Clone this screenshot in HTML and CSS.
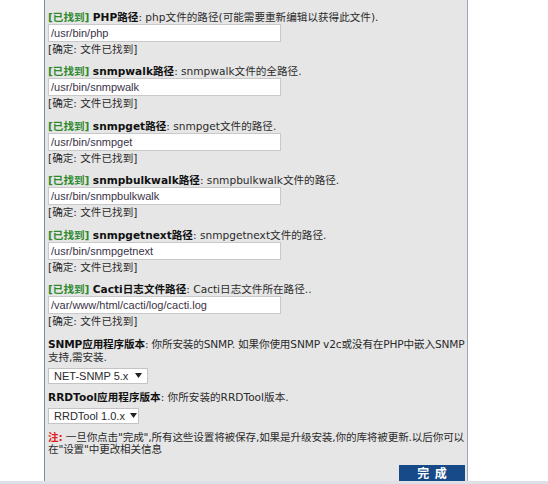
FILE: index.html
```html
<!DOCTYPE html>
<html lang="zh-CN">
<head>
<meta charset="utf-8">
<title>Cacti 安装</title>
<link rel="stylesheet" href="styles.css">
</head>
<body>
<div class="page">
  <div class="side"></div>
  <div class="panel">
    <div class="block">
      <div class="head"><span class="found">[已找到]</span> <b>PHP路径</b>: php文件的路径(可能需要重新编辑以获得此文件).</div>
      <div class="input">/usr/bin/php</div>
      <div class="status">[确定: 文件已找到]</div>
    </div>
    <div class="block">
      <div class="head"><span class="found">[已找到]</span> <b>snmpwalk路径</b>: snmpwalk文件的全路径.</div>
      <div class="input">/usr/bin/snmpwalk</div>
      <div class="status">[确定: 文件已找到]</div>
    </div>
    <div class="block">
      <div class="head"><span class="found">[已找到]</span> <b>snmpget路径</b>: snmpget文件的路径.</div>
      <div class="input">/usr/bin/snmpget</div>
      <div class="status">[确定: 文件已找到]</div>
    </div>
    <div class="block">
      <div class="head"><span class="found">[已找到]</span> <b>snmpbulkwalk路径</b>: snmpbulkwalk文件的路径.</div>
      <div class="input">/usr/bin/snmpbulkwalk</div>
      <div class="status">[确定: 文件已找到]</div>
    </div>
    <div class="block">
      <div class="head"><span class="found">[已找到]</span> <b>snmpgetnext路径</b>: snmpgetnext文件的路径.</div>
      <div class="input">/usr/bin/snmpgetnext</div>
      <div class="status">[确定: 文件已找到]</div>
    </div>
    <div class="block">
      <div class="head"><span class="found">[已找到]</span> <b>Cacti日志文件路径</b>: Cacti日志文件所在路径..</div>
      <div class="input">/var/www/html/cacti/log/cacti.log</div>
      <div class="status">[确定: 文件已找到]</div>
    </div>
    <div class="block opt">
      <div class="head tight"><b>SNMP应用程序版本</b>: 你所安装的SNMP. 如果你使用SNMP v2c或没有在PHP中嵌入SNMP<br>支持,需安装.</div>
      <div class="select wide"><span>NET-SNMP 5.x</span><svg class="arrow" width="7" height="5" viewBox="0 0 7 5"><path d="M0 0h7L3.5 5z" fill="#222"/></svg></div>
    </div>
    <div class="block opt">
      <div class="head"><b>RRDTool应用程序版本</b>: 你所安装的RRDTool版本.</div>
      <div class="select narrow"><span>RRDTool 1.0.x</span><svg class="arrow" width="7" height="5" viewBox="0 0 7 5"><path d="M0 0h7L3.5 5z" fill="#222"/></svg></div>
    </div>
    <div class="note tight"><b class="red">注:</b> 一旦你点击"完成",所有这些设置将被保存,如果是升级安装,你的库将被更新.以后你可以<br>在"设置"中更改相关信息</div>
    <div class="btn">完&nbsp;&nbsp;成</div>
  </div>
  <div class="side"></div>
</div>
<div class="strip"></div>
</body>
</html>
```
FILE: styles.css
```css
html, body {
  margin: 0;
  padding: 0;
  background: #ffffff;
}
body {
  width: 548px;
  height: 484px;
  overflow: hidden;
  font-family: "DejaVu Sans", Verdana, "Noto Sans CJK SC", sans-serif;
  font-size: 10.6px;
  color: #2b2b2b;
}
.page {
  display: flex;
  height: 481px;
}
.side {
  flex: 0 0 44px;
}
.side:last-child {
  flex: 1 1 auto;
}
.panel {
  width: 417px;
  background: #e6e6e6;
  border-left: 1px solid #7d8ea3;
  border-right: 1px solid #9aa6b4;
  padding: 10.5px 2px 0 3px;
  display: flex;
  flex-direction: column;
}
.block {
  margin-bottom: 9.5px;
}
.head {
  line-height: 13px;
}
.head b {
  color: #111;
}
.tight {
  white-space: nowrap;
  letter-spacing: -0.15px;
}
.found {
  color: #2f8a2f;
  font-weight: bold;
}
.input {
  box-sizing: border-box;
  width: 233px;
  height: 18px;
  background: #fff;
  border: 1px solid #c9c9c9;
  padding: 0 2px;
  line-height: 16px;
  font-family: "Liberation Sans", Arial, "Noto Sans CJK SC", sans-serif;
  font-size: 11px;
  color: #3a3346;
}
.status {
  margin-top: 1px;
  line-height: 13px;
}
.opt {
  margin-bottom: 7px;
}
.select {
  box-sizing: border-box;
  height: 16px;
  margin-top: 4px;
  background: #fff;
  border: 1px solid #c4c4c4;
  display: flex;
  align-items: center;
  gap: 5px;
  padding: 0 5px 0 5px;
  justify-content: space-between;
  line-height: 14px;
  white-space: nowrap;
  font-family: "Liberation Sans", Arial, sans-serif;
  font-size: 11px;
  color: #2a2a2a;
}
.arrow {
  flex: 0 0 auto;
}
.wide {
  width: 100px;
}
.narrow {
  width: 91px;
}
.note {
  line-height: 12px;
}
.red {
  color: #e02020;
}
.btn {
  margin-top: auto;
  align-self: flex-end;
  width: 66px;
  height: 16px;
  background: #174a88;
  color: #fff;
  font-family: "Noto Sans CJK SC", sans-serif;
  font-weight: bold;
  font-size: 12px;
  line-height: 16px;
  text-align: center;
}
.strip {
  height: 3px;
  background: #dde1e6;
}
```
